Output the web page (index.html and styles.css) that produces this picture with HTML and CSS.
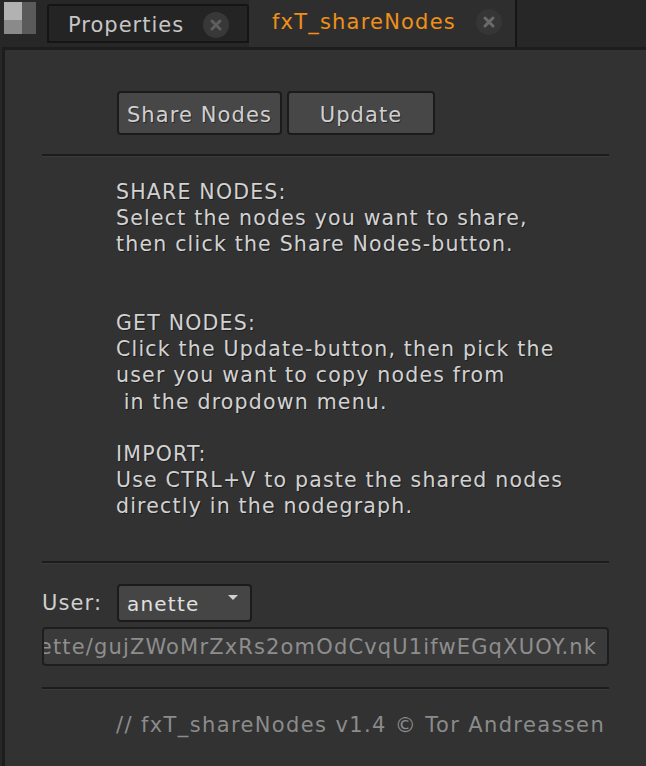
FILE: index.html
```html
<!DOCTYPE html>
<html>
<head>
<meta charset="utf-8">
<link rel="stylesheet" href="styles.css">
</head>
<body>
<div class="window">
  <div class="tabbar">
    <div class="corner-icon"><span class="ci-a"></span><span class="ci-b"></span><span class="ci-c"></span></div>
    <div class="tab">
      <span class="tab-label">Properties</span>
      <span class="tab-close">
        <svg viewBox="0 0 28 28" width="28" height="28"><circle cx="14" cy="14" r="13" fill="#383838"/><path d="M10 10 L18 18 M18 10 L10 18" stroke="#5e5e5e" stroke-width="3" stroke-linecap="round"/></svg>
      </span>
    </div>
    <div class="tab tab-active">
      <span class="tab-label">fxT_shareNodes</span>
      <span class="tab-close">
        <svg viewBox="0 0 28 28" width="28" height="28"><circle cx="14" cy="14" r="13" fill="#363636"/><path d="M10 10 L18 18 M18 10 L10 18" stroke="#6a6a6a" stroke-width="3" stroke-linecap="round"/></svg>
      </span>
    </div>
    <div class="tab-fill"></div>
  </div>
  <div class="panel">
    <div class="buttons">
      <button class="btn btn-share">Share Nodes</button>
      <button class="btn btn-update">Update</button>
    </div>
    <div class="sep"></div>
    <div class="help">
      <p>SHARE NODES:<br>Select the nodes you want to share,<br>then click the Share Nodes-button.</p>
      <p class="gap2">GET NODES:<br>Click the Update-button, then pick the<br>user you want to copy nodes from<br>&nbsp;in the dropdown menu.</p>
      <p class="gap1">IMPORT:<br>Use CTRL+V to paste the shared nodes<br>directly in the nodegraph.</p>
    </div>
    <div class="sep sep-mid"></div>
    <div class="user-row">
      <span class="user-label">User:</span>
      <div class="dropdown"><span>anette</span><span class="arrow"></span></div>
    </div>
    <div class="path-field"><span class="path-text">/mnt/shared/fxT_shareNodes/anette/gujZWoMrZxRs2omOdCvqU1ifwEGqXUOY.nk</span></div>
    <div class="sep sep-low"></div>
    <div class="footer">// fxT_shareNodes v1.4 © Tor Andreassen</div>
  </div>
</div>
</body>
</html>
```

FILE: styles.css
```css
html, body {
  margin: 0;
  padding: 0;
  background: #272727;
}
body {
  width: 646px;
  height: 766px;
  overflow: hidden;
  font-family: "DejaVu Sans", Verdana, sans-serif;
}
.window {
  width: 646px;
  height: 766px;
  display: flex;
  flex-direction: column;
}
.tabbar {
  height: 47px;
  display: flex;
  align-items: flex-end;
  background: #272727;
  flex: none;
}
.corner-icon {
  align-self: flex-start;
  margin: 2px 0 0 4px;
  width: 32px;
  height: 32px;
  display: grid;
  grid-template-columns: 18px 14px;
  grid-template-rows: 18px 14px;
}
.ci-a { background: #b2b2b2; }
.ci-b { background: #5a5a5a; grid-row: 1 / span 2; grid-column: 2; }
.ci-c { background: #8a8a8a; grid-row: 2; grid-column: 1; }
.tab {
  box-sizing: border-box;
  margin-left: 11px;
  width: 202px;
  height: 39px;
  margin-bottom: 4px;
  background: #242424;
  border: 2px solid #151515;
  border-radius: 3px 3px 0 0;
  display: flex;
  align-items: center;
  padding-left: 19px;
  padding-top: 3px;
  color: #c6c6c6;
  font-size: 21px;
  letter-spacing: 1px;
}
.tab .tab-label {
  width: 134px;
}
.tab-close {
  display: flex;
  width: 28px;
  height: 28px;
}
.tab-active {
  margin-left: 0;
  margin-bottom: 0;
  width: 268px;
  height: 47px;
  background: #2e2e2e;
  border: none;
  border-right: 2px solid #151515;
  border-radius: 0;
  padding-left: 23px;
  padding-top: 0;
  padding-bottom: 3px;
  color: #f0901a;
  letter-spacing: 1.2px;
}
.tab-active .tab-label {
  width: 203px;
}
.tab-fill {
  flex: 1;
  height: 47px;
}
.panel {
  flex: 1;
  background: #323232;
  border-top: 3px solid #1d1d1d;
  border-left: 3px solid #1d1d1d;
  margin-left: 2px;
  padding: 41px 37px 0 37px;
  color: #cfcfcf;
}
.buttons {
  display: flex;
  gap: 5px;
  padding-left: 75px;
}
.btn {
  box-sizing: border-box;
  height: 44px;
  background: #474747;
  border: 2px solid #1b1b1b;
  border-radius: 4px;
  color: #d0d0d0;
  font-family: "DejaVu Sans", Verdana, sans-serif;
  font-size: 21px;
  letter-spacing: 1.1px;
  padding: 3px 0 0 0;
  text-shadow: 1px 1px 0 #2a2a2a;
}
.btn-share { width: 165px; }
.btn-update { width: 148px; }
.sep {
  height: 2px;
  background: #1c1c1c;
  border-bottom: 1px solid #3a3a3a;
  margin-top: 19px;
  width: 567px;
}
.help {
  padding-left: 74px;
  margin-top: 22px;
  font-size: 20.5px;
  line-height: 26.2px;
  letter-spacing: 1.2px;
  color: #d2d2d2;
  text-shadow: 1px 1px 0 #1e1e1e;
}
.help p {
  margin: 0;
}
.help .gap2 { margin-top: 52.4px; }
.help .gap1 { margin-top: 26.2px; }
.sep-mid { margin-top: 41px; }
.user-row {
  display: flex;
  align-items: center;
  margin-top: 20px;
  gap: 13px;
}
.user-label {
  font-size: 21px;
  letter-spacing: 1.1px;
  color: #cfcfcf;
  width: 62px;
}
.dropdown {
  box-sizing: border-box;
  width: 135px;
  height: 38px;
  background: #454545;
  border: 2px solid #1b1b1b;
  border-radius: 4px;
  display: flex;
  align-items: center;
  justify-content: space-between;
  padding: 2px 12px 0 8px;
  font-size: 20px;
  letter-spacing: 1.2px;
  color: #e0e0e0;
}
.arrow {
  width: 0;
  height: 0;
  border-left: 5px solid transparent;
  border-right: 5px solid transparent;
  border-top: 5px solid #d0d0d0;
  margin-top: -12px;
}
.path-field {
  box-sizing: border-box;
  margin-top: 5px;
  width: 567px;
  height: 39px;
  background: #3a3a3a;
  border: 2px solid #1e1e1e;
  border-radius: 4px;
  display: flex;
  justify-content: flex-end;
  align-items: center;
  overflow: hidden;
  padding: 2px 10px 0 0;
  white-space: nowrap;
  font-size: 21px;
  letter-spacing: 1.15px;
  color: #8e8e8e;
}
.path-text { flex: none; }
.sep-low { margin-top: 21px; }
.footer {
  margin-top: 23px;
  padding-left: 74px;
  font-size: 21px;
  letter-spacing: 1.38px;
  color: #8b8b8b;
}
```
